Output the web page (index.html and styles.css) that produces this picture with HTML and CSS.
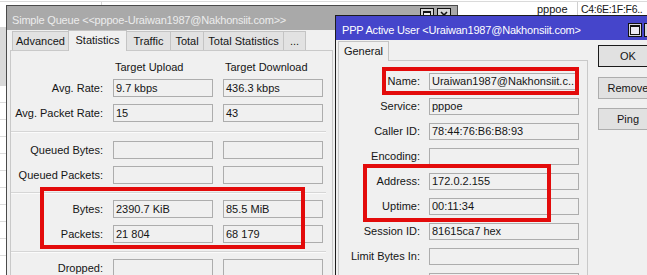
FILE: index.html
```html
<!DOCTYPE html>
<html>
<head>
<meta charset="utf-8">
<link rel="stylesheet" href="styles.css">
</head>
<body>
<div class="desktop">
  <div class="bgwin">
    <div class="bg-row">
      <div class="bg-cell first"></div>
      <div class="bg-cell"></div>
      <div class="bg-cell svc">pppoe</div>
      <div class="bg-cell mac">C4:6E:1F:F6..</div>
    </div>
    <div class="bg-side">
      <div class="bg-head"></div>
      <div class="bg-line"></div>
      <div class="bg-line"></div>
      <div class="bg-line"></div>
      <div class="bg-line"></div>
      <div class="bg-line"></div>
      <div class="bg-line"></div>
      <div class="bg-line"></div>
      <div class="bg-line"></div>
      <div class="bg-line"></div>
      <div class="bg-line"></div>
    </div>
  </div>

  <section class="win win-queue">
    <header class="titlebar tb-grey">
      <span class="title">Simple Queue &lt;&lt;pppoe-Uraiwan1987@Nakhonsiit.com&gt;&gt;</span>
      <span class="ctrls">
        <svg class="ctl" width="14" height="14" viewBox="0 0 14 14"><rect x="0.5" y="0.5" width="13" height="13" fill="#d6d6d6" stroke="#111"/><rect x="3.5" y="3.5" width="7" height="7" fill="#f0f0f0" stroke="#111"/><line x1="3" y1="4.5" x2="11" y2="4.5" stroke="#111"/></svg>
        <svg class="ctl" width="14" height="14" viewBox="0 0 14 14"><rect x="0.5" y="0.5" width="13" height="13" fill="#d6d6d6" stroke="#111"/><path d="M4 4 L10 10 M10 4 L4 10" stroke="#111" stroke-width="1.6"/></svg>
      </span>
    </header>
    <div class="wbody">
      <div class="main">
        <div class="tabs">
          <div class="tab t-adv">Advanced</div>
          <div class="tab t-stat active">Statistics</div>
          <div class="tab t-traf">Traffic</div>
          <div class="tab t-tot">Total</div>
          <div class="tab t-totst">Total Statistics</div>
          <div class="tab t-more">...</div>
        </div>
        <div class="panel panel-q">
          <div class="grid-q head">
            <span></span><span class="colhead">Target Upload</span><span class="colhead">Target Download</span>
          </div>
          <div class="grid-q">
            <span class="lbl">Avg. Rate:</span><div class="field">9.7 kbps</div><div class="field">436.3 kbps</div>
            <span class="lbl">Avg. Packet Rate:</span><div class="field">15</div><div class="field">43</div>
          </div>
          <div class="sep sep-first"></div>
          <div class="grid-q">
            <span class="lbl">Queued Bytes:</span><div class="field"></div><div class="field"></div>
            <span class="lbl">Queued Packets:</span><div class="field"></div><div class="field"></div>
          </div>
          <div class="sep"></div>
          <div class="grid-q">
            <span class="lbl">Bytes:</span><div class="field">2390.7 KiB</div><div class="field">85.5 MiB</div>
            <span class="lbl">Packets:</span><div class="field">21 804</div><div class="field">68 179</div>
          </div>
          <div class="sep"></div>
          <div class="grid-q">
            <span class="lbl">Dropped:</span><div class="field"></div><div class="field"></div>
          </div>
        </div>
      </div>
    </div>
  </section>

  <section class="win win-ppp">
    <header class="titlebar tb-blue">
      <span class="title">PPP Active User &lt;Uraiwan1987@Nakhonsiit.com&gt;</span>
      <span class="ctrls">
        <svg class="ctl" width="14" height="14" viewBox="0 0 14 14"><rect x="0.5" y="0.5" width="13" height="13" fill="#d4d4dc" stroke="#111"/><rect x="2.5" y="2.5" width="9" height="9" fill="#ecebf4" stroke="#111"/><line x1="2" y1="3.5" x2="12" y2="3.5" stroke="#111"/></svg>
        <svg class="ctl" width="14" height="14" viewBox="0 0 14 14"><rect x="0.5" y="0.5" width="13" height="13" fill="#d4d4dc" stroke="#111"/><path d="M4 4 L10 10 M10 4 L4 10" stroke="#111" stroke-width="1.6"/></svg>
      </span>
    </header>
    <div class="wbody">
      <div class="main">
        <div class="tabs tabs-ppp">
          <div class="tab t-gen active">General</div>
        </div>
        <div class="panel panel-ppp">
          <div class="grid-p">
            <span class="lbl">Name:</span><div class="field">Uraiwan1987@Nakhonsiit.c..</div>
            <span class="lbl">Service:</span><div class="field">pppoe</div>
            <span class="lbl">Caller ID:</span><div class="field">78:44:76:B6:B8:93</div>
            <span class="lbl">Encoding:</span><div class="field"></div>
            <span class="lbl">Address:</span><div class="field">172.0.2.155</div>
            <span class="lbl">Uptime:</span><div class="field">00:11:34</div>
            <span class="lbl">Session ID:</span><div class="field">81615ca7 hex</div>
            <span class="lbl">Limit Bytes In:</span><div class="field"></div>
            <span class="lbl"></span><div class="field"></div>
          </div>
        </div>
      </div>
      <div class="side">
        <div class="btn default">OK</div>
        <div class="btn">Remove</div>
        <div class="btn">Ping</div>
      </div>
    </div>
  </section>

  <div class="mark mark-1"></div>
  <div class="mark mark-2"></div>
  <div class="mark mark-3"></div>
</div>
</body>
</html>
```

FILE: styles.css
```css
* { box-sizing: border-box; margin: 0; padding: 0; }
html, body { width: 647px; height: 275px; overflow: hidden; }
body {
  font: 11px/13px "Liberation Sans", Arial, sans-serif;
  color: #151515;
  background: #fff;
}
.desktop { position: relative; width: 647px; height: 275px; overflow: hidden; }

/* background list window */
.bgwin {
  position: absolute; left: 0; top: 0; width: 647px; height: 275px;
  background: #fff; display: flex; flex-direction: column;
}
.bg-row {
  display: grid; grid-template-columns: 102px 435px 40px 1fr;
  margin-top: 1px; border-top: 1px solid #dadada; height: 17px;
}
.bg-cell { padding-top: 1px; white-space: nowrap; overflow: hidden; }
.bg-cell.first { border-right: 1px solid #d6d6d6; }
.bg-cell.mac { border-left: 1px solid #cfcfcf; padding-left: 3px; font-size: 10.5px; letter-spacing: -0.3px; }
.bg-side { width: 6px; margin-top: 9px; display: flex; flex-direction: column; }
.bg-head { height: 59px; background: #d9d9d9; }
.bg-line { height: 17px; border-bottom: 1px solid #dcdcdc; }

/* windows */
.win {
  position: absolute; display: flex; flex-direction: column;
  background: #f0f0f0; overflow: hidden;
}
.win-queue { left: 6px; top: 5px; width: 452px; height: 290px; border: 1px solid #4a4a4a; z-index: 1; }
.win-ppp { left: 335px; top: 15px; width: 332px; height: 280px; border: 1px solid #1c1c1c; z-index: 2; }

.titlebar { height: 24px; display: flex; align-items: flex-start; flex: none; }
.titlebar .title { padding-top: 8px; white-space: nowrap; letter-spacing: -0.2px; }
.tb-grey { background: #a9a9a9; color: #ececec; }
.tb-grey .title { padding-left: 5px; }
.tb-blue { background: #4545cb; color: #fff; }
.tb-blue .title { padding-left: 6px; }
.ctrls { display: flex; }
.ctl { display: block; }
.win-queue .ctrls { gap: 3px; margin: 2px 6px 0 auto; }
.win-ppp .ctrls { gap: 2px; margin: 7px 8px 0 auto; }

.wbody { display: flex; flex: 1; }
.win-queue .wbody { padding-left: 3px; }
.win-ppp .wbody { padding-left: 2px; }
.main { display: flex; flex-direction: column; }

/* tabs */
.tabs { display: flex; align-items: flex-end; height: 20px; padding-left: 2px; flex: none; }
.tabs-ppp { padding-left: 0; }
.tab {
  height: 19px; border: 1px solid #c4c4c4; border-bottom: none;
  background: #e2e2e2; text-align: center; padding-top: 3px;
  margin-left: -1px; white-space: nowrap;
}
.tab:first-child { margin-left: 0; }
.tab.active {
  height: 21px; background: #f0f0f0; margin-bottom: -1px;
  position: relative; z-index: 1; padding-top: 3px;
}
.t-adv { width: 57px; }
.t-stat { width: 59px; }
.t-traf { width: 45px; }
.t-tot { width: 34px; }
.t-totst { width: 81px; }
.t-more { width: 23px; }
.t-gen { width: 51px; }
.tabs-ppp .tab.active { height: 20px; }

/* panels */
.panel { border: 1px solid #c9c9c9; background: #f0f0f0; flex: 1; }
.panel-q { width: 323px; padding-top: 10px; }
.panel-ppp { width: 250px; padding-top: 12px; }

.grid-q {
  display: grid; grid-template-columns: 92px 100px 100px;
  column-gap: 10px; row-gap: 7px;
}
.grid-q.head { margin-bottom: 5px; }
.colhead { padding-left: 2px; white-space: nowrap; }

.grid-p {
  display: grid; grid-template-columns: 81px 150px;
  column-gap: 9px; row-gap: 8px;
}

.lbl { text-align: right; white-space: nowrap; align-self: center; }
.field {
  height: 18px; border: 1px solid #adadad; background: #f0f0f0;
  padding-left: 2px; line-height: 16px; white-space: nowrap; overflow: hidden;
}
.grid-p .field { height: 17px; line-height: 15px; }

.sep {
  height: 2px; border-top: 1px solid #d6d6d6; border-bottom: 1px solid #fbfbfb;
  margin: 8px 6px 6px 0;
}
.sep-first { margin-top: 9px; margin-bottom: 8px; }

/* buttons */
.side { display: flex; flex-direction: column; gap: 9.5px; margin: 5px 0 0 10px; }
.btn {
  width: 60px; height: 22px; border: 1px solid #adadad; background: #e1e1e1;
  text-align: center; line-height: 20px;
}
.btn.default { border-color: #1a1a1a; }

/* annotation marks */
.mark { position: absolute; border: 4px solid #e30b0b; z-index: 5; }
.mark-1 { left: 40px; top: 187px; width: 265px; height: 62px; }
.mark-2 { left: 382px; top: 67px; width: 197px; height: 28px; }
.mark-3 { left: 363px; top: 164px; width: 188px; height: 58px; }
```
